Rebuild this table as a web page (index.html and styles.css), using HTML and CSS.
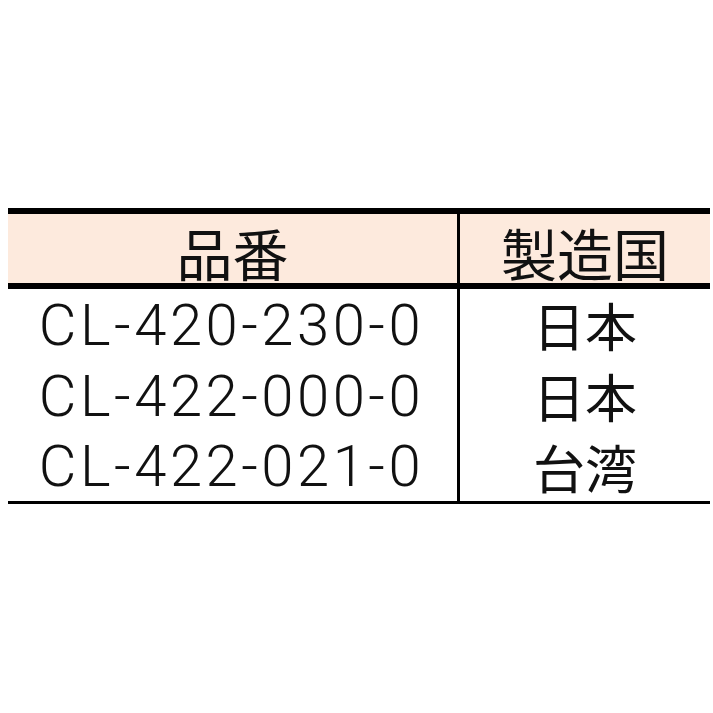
FILE: index.html
```html
<!DOCTYPE html>
<html lang="ja">
<head>
<meta charset="utf-8">
<link rel="stylesheet" href="styles.css">
</head>
<body>
<div class="tbl">
  <div class="cell head left">品番</div>
  <div class="cell head">製造国</div>
  <div class="cell body left num">CL-420-230-0</div>
  <div class="cell body jp">日本</div>
  <div class="cell body left num">CL-422-000-0</div>
  <div class="cell body jp">日本</div>
  <div class="cell body left num last">CL-422-021-0</div>
  <div class="cell body jp last">台湾</div>
</div>
</body>
</html>
```
FILE: styles.css
```css
html, body {
  margin: 0;
  padding: 0;
  background: #fff;
}
body {
  width: 713px;
  height: 713px;
  overflow: hidden;
}
.tbl {
  margin: 208px 0 0 8px;
  width: 702px;
  border-top: 6px solid #000;
  border-bottom: 3px solid #000;
  display: grid;
  grid-template-columns: 452px 250px;
  color: #111;
}
.cell {
  display: flex;
  align-items: center;
  justify-content: center;
  box-sizing: border-box;
}
.left {
  border-right: 3px solid #000;
}
.head {
  height: 75px;
  background: #fdeadd;
  border-bottom: 6px solid #000;
  padding-top: 6px;
  font-family: "Noto Sans CJK JP", sans-serif;
  font-size: 56px;
}
.body {
  height: 71px;
}
.body.last {
  height: 70px;
}
.num {
  font-family: Roboto, "Liberation Sans", sans-serif;
  font-weight: 300;
  font-size: 58px;
  letter-spacing: 3.5px;
  padding-right: 2px;
  color: #111;
}
.jp {
  font-family: "Noto Sans CJK JP", sans-serif;
  font-size: 52px;
}
```
